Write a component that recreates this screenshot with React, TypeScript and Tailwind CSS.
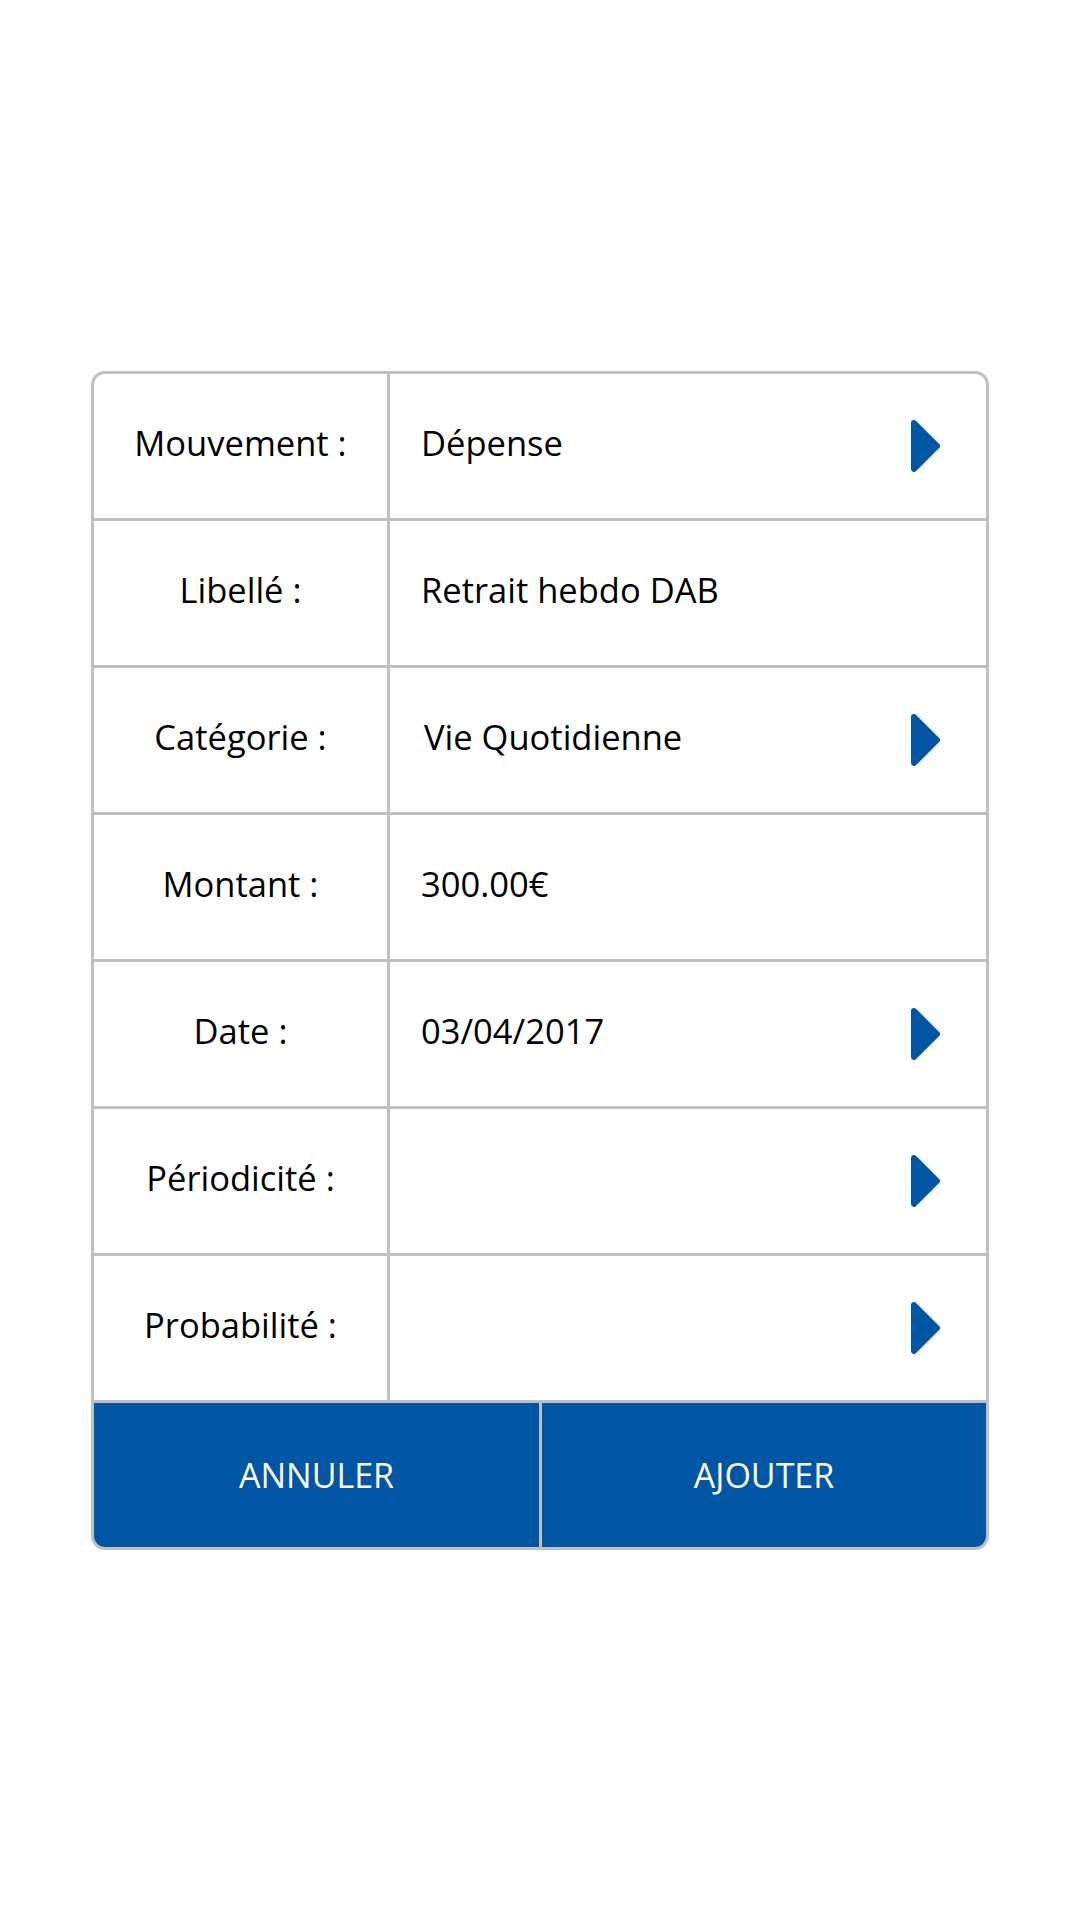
import React from 'react';

type Field = {
    label: string;
    value?: string;
    arrow?: boolean;
    indent?: boolean;
};

const fields: Field[] = [
    { label: 'Mouvement :', value: 'Dépense', arrow: true },
    { label: 'Libellé :', value: 'Retrait hebdo DAB' },
    { label: 'Catégorie :', value: 'Vie Quotidienne', arrow: true, indent: true },
    { label: 'Montant :', value: '300.00€' },
    { label: 'Date :', value: '03/04/2017', arrow: true },
    { label: 'Périodicité :', arrow: true },
    { label: 'Probabilité :', arrow: true },
];

function Chevron() {
    return (
        <svg width="31" height="54" viewBox="0 0 31 54" className="shrink-0">
            <path
                d="M4 4 L27 27 L4 50 Z"
                fill="#0055a5"
                stroke="#0055a5"
                strokeWidth="6"
                strokeLinejoin="round"
            />
        </svg>
    );
}

export default function App() {
    return (
        <div className="min-h-[1920px] w-[1080px] bg-white pt-[371px] font-['Open_Sans',sans-serif] text-black">
            <div className="mx-auto w-[898px] overflow-hidden rounded-[14px] border-[3px] border-[#c0c0c0]">
                {fields.map((f) => (
                    <div key={f.label} className="flex h-[147px] border-b-[3px] border-[#c0c0c0]">
                        {/* label column */}
                        <div className="flex w-[296px] shrink-0 items-center justify-center border-r-[3px] border-[#c0c0c0] pb-[7px] text-[34.5px]">
                            {f.label}
                        </div>
                        {/* value column */}
                        <div
                            className={
                                f.indent
                                    ? 'flex flex-1 items-center justify-between pb-[7px] pl-[34px] pr-[45px] text-[34.5px]'
                                    : 'flex flex-1 items-center justify-between pb-[7px] pl-[31px] pr-[45px] text-[34.5px]'
                            }
                        >
                            <span>{f.value}</span>
                            {f.arrow && (
                                <span className="pt-[7px]">
                                    <Chevron />
                                </span>
                            )}
                        </div>
                    </div>
                ))}

                {/* Actions */}
                <div className="flex h-[144px] bg-[#0055a5] text-[34px] text-white">
                    <button className="flex w-[448px] shrink-0 items-center justify-center border-r-[3px] border-[#c0c0c0]">
                        ANNULER
                    </button>
                    <button className="flex flex-1 items-center justify-center">AJOUTER</button>
                </div>
            </div>
        </div>
    );
}
